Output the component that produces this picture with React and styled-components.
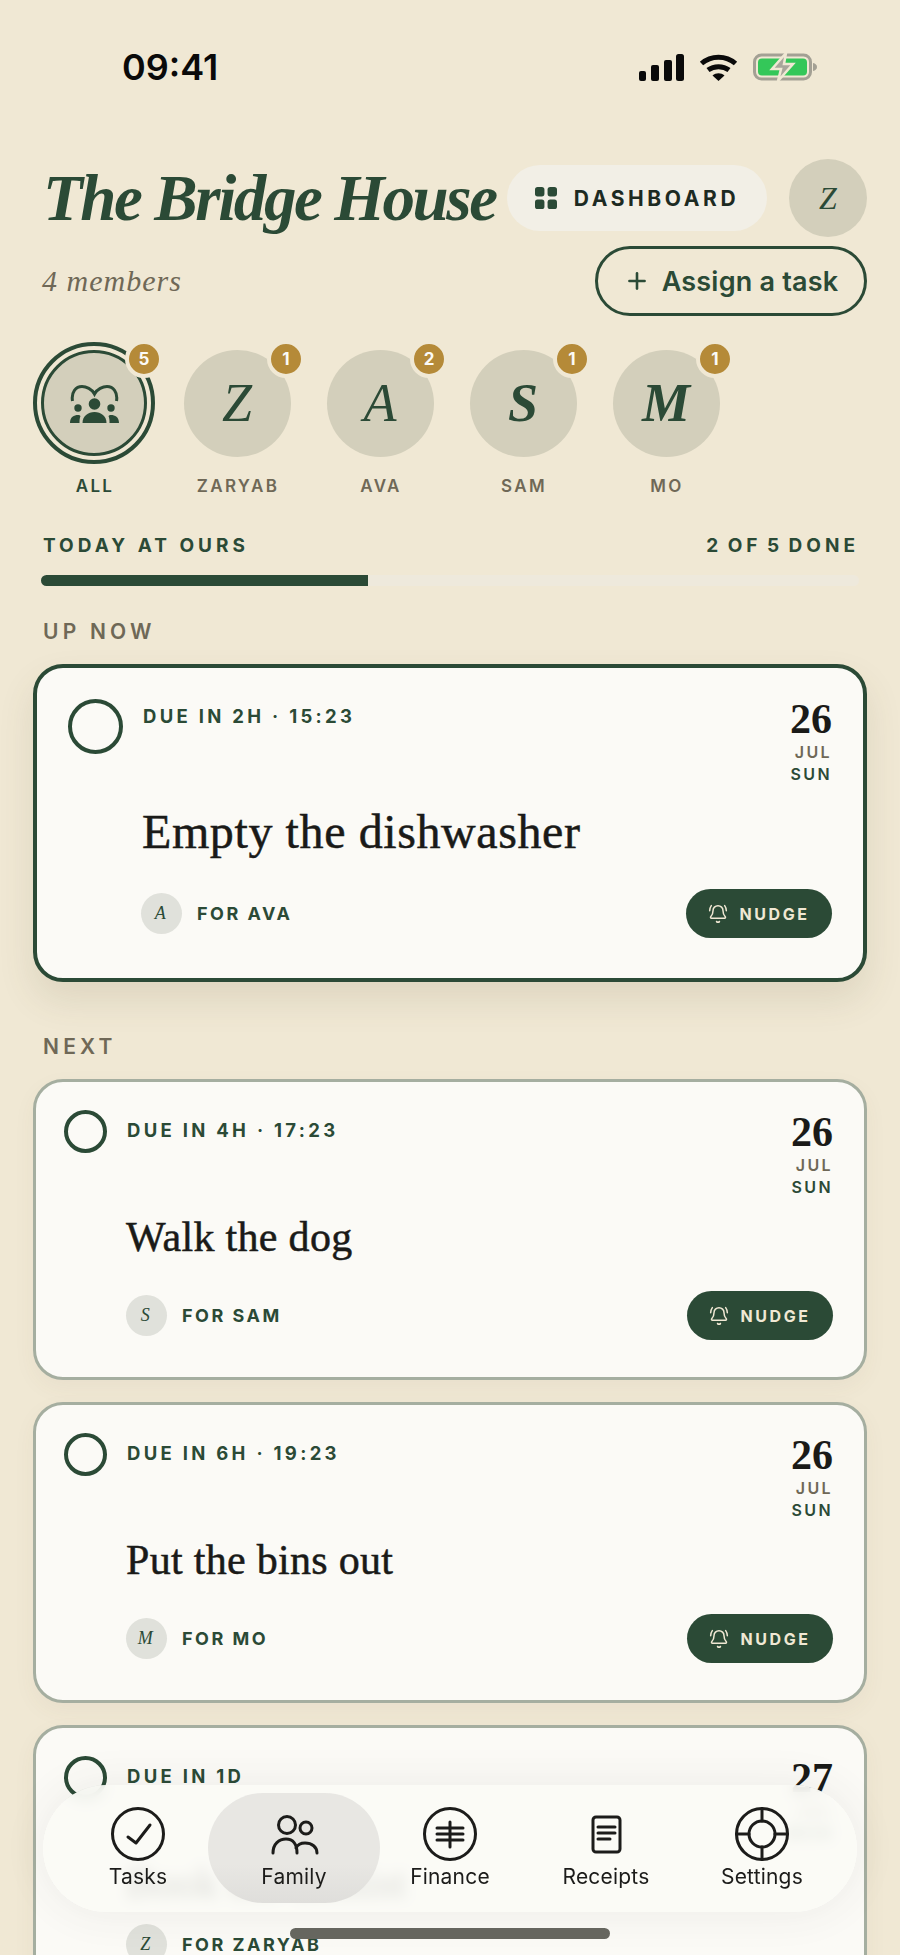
import React from "react";
import styled, { createGlobalStyle, css } from "styled-components";
import { BellRing, Plus } from "lucide-react";

const GlobalStyle = createGlobalStyle`
  html, body {
    margin: 0;
    padding: 0;
    background: #f0e8d4;
  }
  * { box-sizing: border-box; }
`;

const green = "#2b4a36";
const sans = `Inter, "Liberation Sans", sans-serif`;
const serif = `"Liberation Serif", serif`;

const Page = styled.div`
  position: relative;
  width: 900px;
  height: 1955px;
  overflow: hidden;
  background: #f0e8d4;
  font-family: ${sans};
`;

const StatusBar = styled.div`
  height: 134px;
  display: flex;
  align-items: center;
  justify-content: space-between;
  padding: 0 83px 0 122px;
`;

const Time = styled.div`
  font-size: 36px;
  font-weight: 600;
  color: #0a0a0a;
`;

const StatusIcons = styled.div`
  display: flex;
  align-items: center;
  gap: 15px;
`;

const Header = styled.header`
  padding: 25px 33px 0 33px;
`;

const HeaderRow = styled.div`
  display: flex;
  align-items: center;
  justify-content: space-between;
`;

const Title = styled.h1`
  margin: 0 0 0 10px;
  font-family: ${serif};
  font-style: italic;
  font-weight: 700;
  font-size: 65px;
  letter-spacing: -2.4px;
  line-height: 78px;
  white-space: nowrap;
  color: ${green};
`;

const HeaderActions = styled.div`
  display: flex;
  align-items: center;
  gap: 22px;
`;

const DashboardButton = styled.button`
  width: 260px;
  height: 66px;
  border: 0;
  border-radius: 33px;
  background: #f2efe6;
  display: flex;
  align-items: center;
  justify-content: center;
  gap: 17px;
  font-family: ${sans};
  font-size: 21px;
  font-weight: 700;
  letter-spacing: 3.6px;
  color: #1d2a22;
`;

const Face = styled.div`
  width: ${({ $size }) => $size}px;
  height: ${({ $size }) => $size}px;
  flex: none;
  border-radius: 50%;
  background: ${({ $light }) => ($light ? "#e0e1db" : "#d3cfbb")};
  display: flex;
  align-items: center;
  justify-content: center;
  font-family: ${serif};
  font-style: italic;
  font-weight: ${({ $thin }) => ($thin ? 400 : 700)};
  font-size: ${({ $font }) => $font}px;
  color: ${green};
`;

const MembersLine = styled(HeaderRow)`
  margin-top: 9px;
`;

const Members = styled.div`
  margin-left: 9px;
  font-family: ${serif};
  font-style: italic;
  font-size: 30px;
  letter-spacing: 1px;
  color: #6f6857;
`;

const AssignButton = styled.button`
  width: 272px;
  height: 70px;
  border: 3.5px solid ${green};
  border-radius: 35px;
  background: transparent;
  display: flex;
  align-items: center;
  justify-content: center;
  gap: 12px;
  font-family: ${sans};
  font-size: 27px;
  font-weight: 600;
  letter-spacing: 0.2px;
  color: ${green};
`;

const MemberRow = styled.div`
  display: flex;
  gap: 21px;
  padding: 26px 33px 0;
`;

const Member = styled.div`
  width: 122px;
  display: flex;
  flex-direction: column;
  align-items: center;
`;

const FaceSlot = styled.div`
  position: relative;
  width: 122px;
  height: 122px;
  display: flex;
  align-items: center;
  justify-content: center;
`;

const Ring = styled.div`
  width: 122px;
  height: 122px;
  border-radius: 50%;
  border: 4px solid ${green};
  padding: 4px;
  ${Face} {
    border: 3px solid ${green};
  }
`;

const Badge = styled.span`
  position: absolute;
  top: -2px;
  right: ${({ $ring }) => ($ring ? "-8px" : "-7px")};
  width: 38px;
  height: 38px;
  border-radius: 50%;
  border: 4px solid #f0e8d4;
  background: #b58a38;
  color: #fbfaf6;
  display: flex;
  align-items: center;
  justify-content: center;
  font-size: 17px;
  font-weight: 700;
`;

const MemberName = styled.div`
  margin-top: 12px;
  padding-left: 2px;
  font-size: 17px;
  line-height: 20px;
  font-weight: 600;
  letter-spacing: 2.3px;
  color: ${({ $active }) => ($active ? green : "#6f6857")};
`;

const Progress = styled.div`
  padding: 39px 41px 0;
`;

const ProgressText = styled.div`
  display: flex;
  justify-content: space-between;
  padding: 0 0 0 2px;
  font-size: 19px;
  line-height: 22px;
  font-weight: 700;
  letter-spacing: 4px;
  color: ${green};
`;

const ProgressCount = styled.span`
  word-spacing: -3px;
`;

const Track = styled.div`
  margin-top: 18px;
  height: 11px;
  border-radius: 6px;
  background: #eee9dc;
  overflow: hidden;
`;

const Fill = styled.div`
  height: 100%;
  background: ${green};
`;

const SectionLabel = styled.div`
  margin: ${({ $top }) => $top}px 0 0 43px;
  font-size: 21px;
  line-height: 24px;
  font-weight: 600;
  letter-spacing: 4.2px;
  color: #6f6857;
`;

const CardList = styled.div`
  padding: 20px 33px 0;
  display: flex;
  flex-direction: column;
  gap: 22px;
`;

const Card = styled.article`
  background: #fbfaf6;
  border-radius: 30px;
  border: 3px solid #a5aea0;
  padding: 28px 31px 37px 28px;
  box-shadow: 0 8px 22px rgba(90, 80, 50, 0.05);
  ${({ $featured }) =>
    $featured &&
    css`
      border: 4px solid ${green};
      padding: 31px 31px 40px 31px;
      box-shadow: 0 18px 36px rgba(90, 80, 50, 0.12);
    `}
`;

const CardTop = styled.div`
  display: flex;
  align-items: flex-start;
  gap: 20px;
`;

const Check = styled.span`
  flex: none;
  width: ${({ $featured }) => ($featured ? 55 : 43)}px;
  height: ${({ $featured }) => ($featured ? 55 : 43)}px;
  border-radius: 50%;
  border: 4px solid ${green};
`;

const Due = styled.div`
  flex: 1;
  padding-top: ${({ $featured }) => ($featured ? 7 : 10)}px;
  font-size: 18.5px;
  line-height: 20px;
  font-weight: 700;
  letter-spacing: 3.3px;
  color: ${green};
`;

const DateBlock = styled.div`
  width: 46px;
  margin-top: ${({ $featured }) => ($featured ? 1 : 3)}px;
  display: flex;
  flex-direction: column;
  align-items: flex-end;
  font-size: 16px;
  line-height: 22px;
  font-weight: 600;
  letter-spacing: 2.4px;
  color: #6f6857;
`;

const DateDay = styled.div`
  font-family: ${serif};
  font-weight: 700;
  font-size: 42px;
  line-height: 38px;
  letter-spacing: 0;
  color: #1a1a18;
  margin-bottom: 3px;
`;

const DateWeek = styled.div`
  color: ${green};
`;

const TaskTitle = styled.h2`
  margin: ${({ $featured }) => ($featured ? "19px 0 0 74px" : "15px 0 0 62px")};
  font-family: ${serif};
  font-weight: 400;
  font-size: ${({ $featured }) => ($featured ? 48 : 42)}px;
  line-height: ${({ $featured }) => ($featured ? 56 : 48)}px;
  letter-spacing: ${({ $featured }) => ($featured ? 0.6 : 0.3)}px;
  -webkit-text-stroke: 0.5px #1a1a18;
  color: #1a1a18;
`;

const CardFoot = styled.div`
  margin: ${({ $featured, $short }) =>
    $featured ? "29px 0 0 73px" : $short ? "13px 0 0 62px" : "30px 0 0 62px"};
  min-height: 49px;
  display: flex;
  align-items: center;
  justify-content: space-between;
`;

const Assignee = styled.div`
  display: flex;
  align-items: center;
  gap: 15px;
  font-size: 18px;
  font-weight: 700;
  letter-spacing: 2.5px;
  color: ${green};
`;

const NudgeButton = styled.button`
  width: 146px;
  height: 49px;
  border: 0;
  border-radius: 25px;
  background: ${green};
  display: flex;
  align-items: center;
  justify-content: center;
  gap: 11px;
  font-family: ${sans};
  font-size: 16px;
  font-weight: 700;
  letter-spacing: 2.6px;
  color: #f0e8d4;
`;

const TabBar = styled.nav`
  position: absolute;
  left: 43px;
  bottom: 43px;
  width: 814px;
  height: 127px;
  padding: 8px 17px 9px;
  border-radius: 64px;
  background: rgba(251, 250, 246, 0.88);
  backdrop-filter: blur(7px);
  box-shadow: 0 0 44px rgba(60, 70, 60, 0.08);
  display: grid;
  grid-template-columns: repeat(5, 156px);
`;

const Tab = styled.div`
  display: flex;
  flex-direction: column;
  align-items: center;
  padding-top: 13px;
  font-size: 21px;
  line-height: 24px;
  letter-spacing: 0.2px;
  color: #1c1c1a;
  border-radius: 55px;
  ${({ $active }) =>
    $active &&
    css`
      margin: 0 -7.5px 0 -8.5px;
      padding-left: 1px;
      background: linear-gradient(#e8e7e3 65%, #dfdedb);
    `}
`;

const TabIcon = styled.svg`
  display: block;
  margin-bottom: 3px;
  fill: none;
  stroke: #1c1c1a;
  stroke-width: 3;
  stroke-linecap: round;
  stroke-linejoin: round;
`;

const HomeIndicator = styled.div`
  position: absolute;
  left: 290px;
  bottom: 16px;
  width: 320px;
  height: 11px;
  border-radius: 6px;
  background: #66665f;
`;

const SignalIcon = () => (
  <svg width="45" height="27" viewBox="0 0 45 27" fill="#0a0a0a">
    <rect x="0" y="17" width="7" height="10" rx="2" />
    <rect x="12" y="11" width="8" height="16" rx="2" />
    <rect x="25" y="6" width="8" height="21" rx="2" />
    <rect x="37" y="0" width="8" height="27" rx="2.5" />
  </svg>
);

const WifiIcon = () => (
  <svg width="39" height="27" viewBox="0 0 39 27">
    <path d="M2.5 9.5C12 1 27 1 36.5 9.5" fill="none" stroke="#0a0a0a" strokeWidth="5" />
    <path d="M9 16C15 11.5 24 11.5 30 16" fill="none" stroke="#0a0a0a" strokeWidth="5" />
    <path d="M13.5 21.5L19.5 27L25.5 21.5C22 18.5 17 18.5 13.5 21.5Z" fill="#0a0a0a" />
  </svg>
);

const BatteryIcon = () => (
  <svg width="64" height="30" viewBox="0 0 64 30">
    <rect x="1.5" y="3" width="56" height="24" rx="7" fill="none" stroke="#a3a094" strokeWidth="3" />
    <rect x="5" y="6.5" width="49" height="17" rx="4" fill="#34c759" />
    <path d="M60 11C62.5 11.5 64 13 64 15C64 17 62.5 18.5 60 19Z" fill="#a3a094" />
    <path d="M33 1L19 17H28L25 29L40 12H31Z" fill="#a9a69b" stroke="#f0e8d4" strokeWidth="2.5" />
  </svg>
);

const GridIcon = () => (
  <svg width="22" height="22" viewBox="0 0 21 21" fill={green}>
    <rect x="0" y="0" width="9" height="9" rx="2.5" />
    <rect x="12" y="0" width="9" height="9" rx="2.5" />
    <rect x="0" y="12" width="9" height="9" rx="2.5" />
    <rect x="12" y="12" width="9" height="9" rx="2.5" />
  </svg>
);

const EveryoneIcon = () => (
  <svg width="49" height="39" viewBox="0 0 49 39" fill={green}>
    <path
      d="M2.5 17C1 8 6 2.5 12 2.5C16 2.5 22 5 24.5 10C27 5 33 2.5 37 2.5C43 2.5 48 8 46.5 17"
      fill="none"
      stroke={green}
      strokeWidth="3"
    />
    <circle cx="24.5" cy="20" r="5.8" />
    <path d="M12.5 39C12.5 32 18 28 24.5 28C31 28 36.5 32 36.5 39Z" />
    <circle cx="8" cy="24" r="3.7" />
    <path d="M0 39C0 33 4 31 8 31C9.5 31 10 31.5 10.5 32C9.5 34 9.5 37 9.5 39Z" />
    <circle cx="41" cy="24" r="3.7" />
    <path d="M49 39C49 33 45 31 41 31C39.5 31 39 31.5 38.5 32C39.5 34 39.5 37 39.5 39Z" />
  </svg>
);

const tabs = [
  {
    label: "Tasks",
    icon: (
      <>
        <circle cx="28" cy="28" r="25.5" />
        <path d="M18 31L26 37L40 19" />
      </>
    ),
  },
  {
    label: "Family",
    active: true,
    icon: (
      <>
        <circle cx="21" cy="19" r="8.5" />
        <circle cx="40" cy="22" r="6" />
        <path d="M7 47C7 38 13 33 20 33C27 33 31 38 31 47" />
        <path d="M30 42C32 38 36 37 39 37C46 37 51 41 51 47" />
      </>
    ),
  },
  {
    label: "Finance",
    icon: (
      <>
        <circle cx="28" cy="28" r="25.5" />
        <path d="M15 22H41M15 28H41M15 34H41M28 16V41" />
      </>
    ),
  },
  {
    label: "Receipts",
    icon: (
      <>
        <rect x="15" y="11" width="27" height="35" rx="3" />
        <path d="M20 21H37M20 27H37M20 33H32" />
      </>
    ),
  },
  {
    label: "Settings",
    icon: (
      <>
        <circle cx="28" cy="28" r="25.5" />
        <circle cx="28" cy="28" r="13" />
        <path d="M28 2.5V15M28 41V53.5M2.5 28H15M41 28H53.5" />
      </>
    ),
  },
];

const members = [
  { name: "ZARYAB", letter: "Z", count: 1, thin: true },
  { name: "AVA", letter: "A", count: 2, thin: true },
  { name: "SAM", letter: "S", count: 1 },
  { name: "MO", letter: "M", count: 1 },
];

const nextTasks = [
  { due: "DUE IN 4H · 17:23", title: "Walk the dog", who: "SAM", letter: "S", day: 26, month: "JUL", week: "SUN" },
  { due: "DUE IN 6H · 19:23", title: "Put the bins out", who: "MO", letter: "M", day: 26, month: "JUL", week: "SUN" },
  { due: "DUE IN 1D", title: "Book the dentist", who: "ZARYAB", letter: "Z", day: 27, month: "JUL", week: "MON", self: true },
];

const TaskCard = ({ task, featured }) => (
  <Card $featured={featured}>
    <CardTop>
      <Check $featured={featured} />
      <Due $featured={featured}>{task.due}</Due>
      <DateBlock $featured={featured}>
        <DateDay>{task.day}</DateDay>
        <div>{task.month}</div>
        <DateWeek>{task.week}</DateWeek>
      </DateBlock>
    </CardTop>
    <TaskTitle $featured={featured}>{task.title}</TaskTitle>
    <CardFoot $featured={featured} $short={task.self}>
      <Assignee>
        <Face $size={41} $font={18} $light $thin>
          {task.letter}
        </Face>
        FOR {task.who}
      </Assignee>
      {!task.self && (
        <NudgeButton>
          <BellRing size={20} strokeWidth={1.8} />
          NUDGE
        </NudgeButton>
      )}
    </CardFoot>
  </Card>
);

export default function App() {
  return (
    <Page>
      <GlobalStyle />
      <StatusBar>
        <Time>09:41</Time>
        <StatusIcons>
          <SignalIcon />
          <WifiIcon />
          <BatteryIcon />
        </StatusIcons>
      </StatusBar>

      <Header>
        <HeaderRow>
          <Title>The Bridge House</Title>
          <HeaderActions>
            <DashboardButton>
              <GridIcon />
              DASHBOARD
            </DashboardButton>
            <Face $size={78} $font={32} $thin>
              Z
            </Face>
          </HeaderActions>
        </HeaderRow>
        <MembersLine>
          <Members>4 members</Members>
          <AssignButton>
            <Plus size={26} strokeWidth={2.4} />
            Assign a task
          </AssignButton>
        </MembersLine>
      </Header>

      <MemberRow>
        <Member>
          <FaceSlot>
            <Ring>
              <Face $size={106}>
                <EveryoneIcon />
              </Face>
            </Ring>
            <Badge $ring>5</Badge>
          </FaceSlot>
          <MemberName $active>ALL</MemberName>
        </Member>
        {members.map((m) => (
          <Member key={m.name}>
            <FaceSlot>
              <Face $size={107} $font={54} $thin={m.thin}>
                {m.letter}
              </Face>
              <Badge>{m.count}</Badge>
            </FaceSlot>
            <MemberName>{m.name}</MemberName>
          </Member>
        ))}
      </MemberRow>

      <Progress>
        <ProgressText>
          <span>TODAY AT OURS</span>
          <ProgressCount>2 OF 5 DONE</ProgressCount>
        </ProgressText>
        <Track>
          <Fill style={{ width: `${(2 / 5) * 100}%` }} />
        </Track>
      </Progress>

      <SectionLabel $top={34}>UP NOW</SectionLabel>
      <CardList>
        <TaskCard
          featured
          task={{ due: "DUE IN 2H · 15:23", title: "Empty the dishwasher", who: "AVA", letter: "A", day: 26, month: "JUL", week: "SUN" }}
        />
      </CardList>

      <SectionLabel $top={53}>NEXT</SectionLabel>
      <CardList>
        {nextTasks.map((t) => (
          <TaskCard key={t.title} task={t} />
        ))}
      </CardList>

      <TabBar>
        {tabs.map((t) => (
          <Tab key={t.label} $active={t.active}>
            <TabIcon width="56" height="56" viewBox="0 0 56 56">
              {t.icon}
            </TabIcon>
            {t.label}
          </Tab>
        ))}
      </TabBar>
      <HomeIndicator />
    </Page>
  );
}
